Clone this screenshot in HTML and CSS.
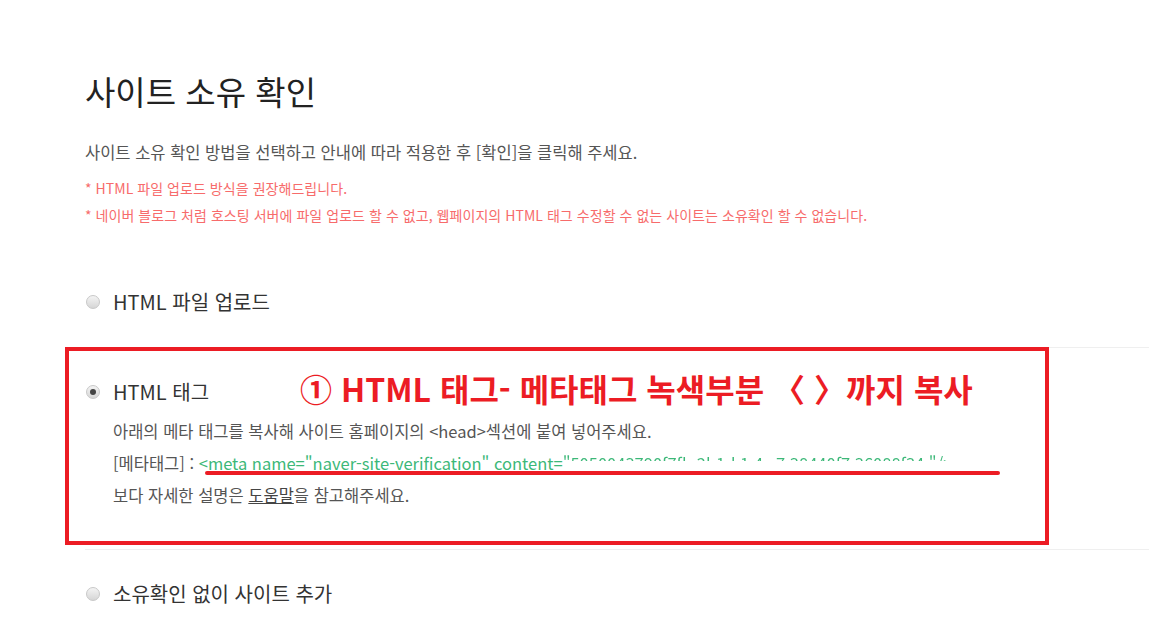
FILE: index.html
```html
<!DOCTYPE html>
<html lang="ko">
<head>
    <meta charset="UTF-8">
    <meta name="viewport" content="width=device-width, initial-scale=1.0">
    <title>사이트 소유 확인</title>
    <link rel="stylesheet" href="styles.css">
</head>
<body>

    <div class="page">
        <h1 class="title">사이트 소유 확인</h1>
        <p class="lead">사이트 소유 확인 방법을 선택하고 안내에 따라 적용한 후 [확인]을 클릭해 주세요.</p>
        <p class="note">* HTML 파일 업로드 방식을 권장해드립니다.</p>
        <p class="note">* 네이버 블로그 처럼 호스팅 서버에 파일 업로드 할 수 없고, 웹페이지의 HTML 태그 수정할 수 없는 사이트는 소유확인 할 수 없습니다.</p>

        <ul class="options">
            <li class="option">
                <label class="option-label"><span class="radio"></span>HTML 파일 업로드</label>
            </li>

            <li class="option option-marked">
                <label class="option-label"><span class="radio checked"></span>HTML 태그</label>
                <div class="guide">
                    <p>아래의 메타 태그를 복사해 사이트 홈페이지의 &lt;head&gt;섹션에 붙여 넣어주세요.</p>
                    <p>[메타태그] : <span class="meta-tag">&lt;meta name="naver-site-verification" content=<span class="hidden-value">"5050043790f7fb 2b1d 1 4c 7 38440f7 36088f34 "/&gt;</span></span></p>
                    <p>보다 자세한 설명은 <a class="help" href="#">도움말</a>을 참고해주세요.</p>
                </div>

                <!-- 스크린샷 위 주석 -->
                <div class="mark-box"></div>
                <div class="mark-text">① HTML 태그- 메타태그 녹색부분 〈 〉까지 복사</div>
                <div class="mark-line"></div>
            </li>

            <li class="option">
                <label class="option-label"><span class="radio"></span>소유확인 없이 사이트 추가</label>
            </li>
        </ul>
    </div>

</body>
</html>
```

FILE: styles.css
```css
body {
    margin: 0;
    background: #fff;
    font-family: "Noto Sans CJK KR", "Noto Sans", sans-serif;
    color: #333;
}

p {
    margin: 0;
}

.page {
    padding: 70px 0 0 85px;
}

/* 제목 */
.title {
    margin: 0;
    font-size: 33px;
    line-height: 42px;
    font-weight: 400;
    color: #222;
}

.lead {
    margin-top: 28px;
    font-size: 16.5px;
    line-height: 24px;
    color: #555;
}

.note {
    font-size: 14px;
    line-height: 27px;
    color: #f76b6b;
    letter-spacing: 0.05px;
}

.lead + .note {
    margin-top: 11px;
}

/* 선택 목록 */
.options {
    list-style: none;
    margin: 29px 0 0;
    padding: 0;
}

.option {
    position: relative;
    padding: 29px 0 30px;
}

.option + .option {
    border-top: 1px solid #efefef;
}

.option-label {
    display: flex;
    align-items: center;
    gap: 13px;
    font-size: 20px;
    line-height: 30px;
    color: #333;
}

.radio {
    width: 14px;
    height: 14px;
    margin-left: 1px;
    box-sizing: border-box;
    border: 1px solid #c8c8c8;
    border-radius: 50%;
    background: linear-gradient(#f4f4f4, #d6d6d6);
    display: flex;
    align-items: center;
    justify-content: center;
}

.radio.checked::after {
    content: "";
    width: 6px;
    height: 6px;
    border-radius: 50%;
    background: #444;
}

.option-marked {
    padding-bottom: 38px;
}

.guide {
    margin: 8px 0 0 28px;
    font-size: 16.5px;
    line-height: 32px;
    color: #555;
}

.meta-tag {
    color: #3cb878;
}

.hidden-value {
    background: linear-gradient(to bottom, #3cb878 42%, transparent 42%);
    -webkit-background-clip: text;
    background-clip: text;
    color: transparent;
}

.help {
    color: #444;
    text-decoration: underline;
}

/* 빨간 주석 */
.mark-box {
    position: absolute;
    left: -20px;
    top: -1px;
    width: 984px;
    height: 198px;
    box-sizing: border-box;
    border: 4px solid #ec1c24;
}

.mark-text {
    position: absolute;
    left: 215px;
    top: 20px;
    font-size: 32px;
    line-height: 40px;
    font-weight: 700;
    color: #ec1c24;
    white-space: nowrap;
}

.mark-line {
    position: absolute;
    left: 120px;
    top: 123px;
    width: 795px;
    height: 4px;
    border-radius: 2px;
    background: #ec1c24;
}
```
